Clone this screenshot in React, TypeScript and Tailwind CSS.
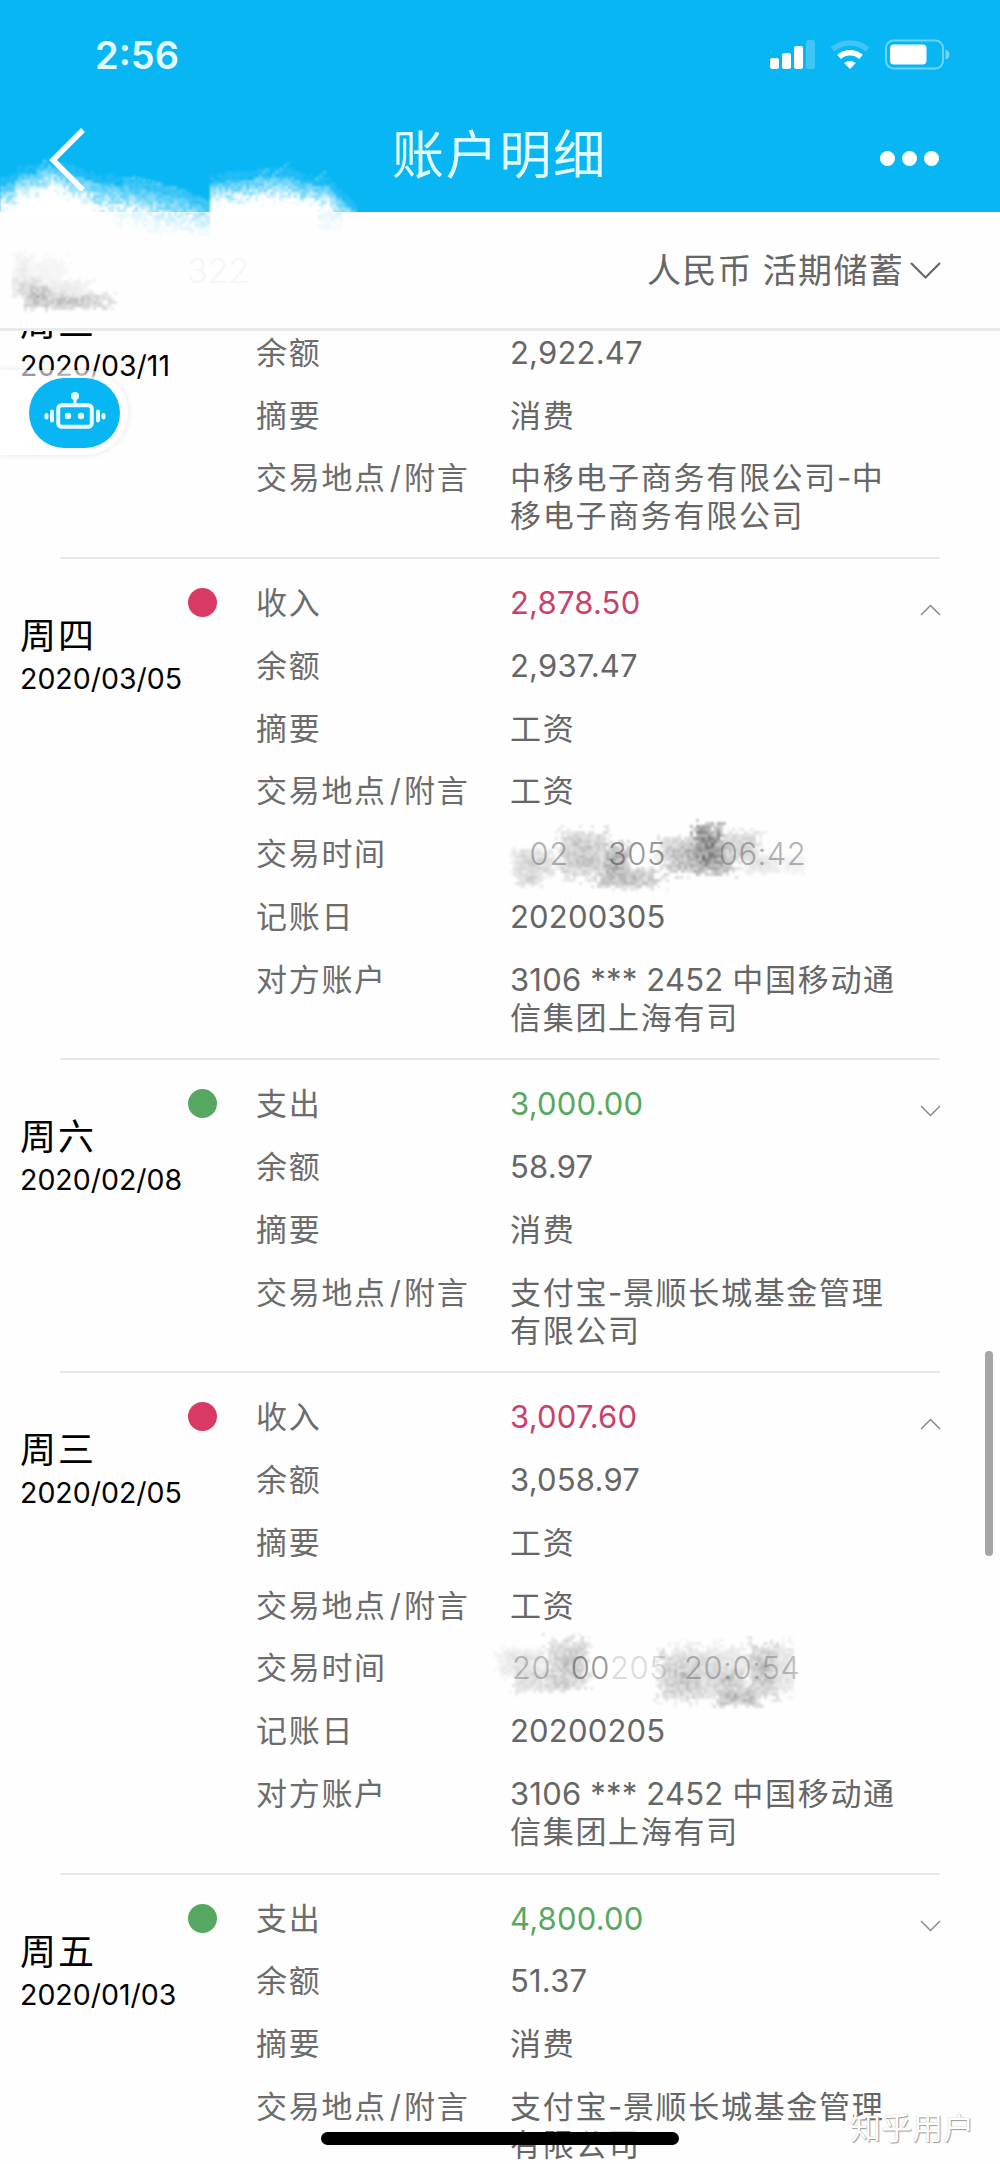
import React from 'react';

const CN = "font-['Inter','Noto_Sans_CJK_SC',sans-serif]";

/* Deterministic pseudo-random value in 0..1 for a grid cell */
function noise(x: number, y: number, seed = 1) {
  const v = Math.sin(x * 12.9898 + y * 78.233 + seed * 37.719) * 43758.5453;
  return v - Math.floor(v);
}

/* Splits a string so that CJK runs and Latin runs can be tracked separately */
function Mixed({ text }: { text: string }) {
  const parts = text.match(/[\u4e00-\u9fff]+|[^\u4e00-\u9fff]+/g) ?? [];
  return (
    <>
      {parts.map((p, i) => (
        <span
          key={i}
          className={
            /[\u4e00-\u9fff]/.test(p)
              ? 'tracking-[1.7px]'
              : p === '/'
                ? 'px-[3px]'
                : p === '-'
                  ? 'tracking-[0.5px]'
                  : 'tracking-[0.2px]'
          }
        >
          {p}
        </span>
      ))}
    </>
  );
}

type Blob = [cx: number, cy: number, rx: number, ry: number, strength: number];

/* Pixelated grey smear built from soft elliptical blobs */
function Smudge({ w, h, blobs, seed, cell = 3 }: { w: number; h: number; blobs: Blob[]; seed: number; cell?: number }) {
  const rects: React.ReactNode[] = [];
  for (let y = 0; y < h; y += cell) {
    for (let x = 0; x < w; x += cell) {
      let a = 0;
      for (const [cx, cy, rx, ry, s] of blobs) {
        const d = Math.max(Math.abs((x - cx) / rx), Math.abs((y - cy) / ry));
        const edge = 1 + (noise(x, y, seed + 5) - 0.5) * 0.5;
        if (d < edge) a = Math.max(a, s * (1 - d * 0.55));
      }
      a *= 0.45 + noise(x, y, seed) * 0.75;
      if (a > 0.03) rects.push(<rect key={`${x}-${y}`} x={x} y={y} width={cell} height={cell} fill="#555" opacity={a.toFixed(2)} />);
    }
  }
  return (
    <svg width={w} height={h} viewBox={`0 0 ${w} ${h}`} className="blur-[0.8px]">
      {rects}
    </svg>
  );
}

const EDGE: [number, number][] = [
  [0, 184], [12, 182], [18, 173], [35, 171], [48, 164], [62, 170], [82, 177], [100, 182], [125, 184], [150, 190],
  [180, 196], [207, 208], [209, 181], [240, 179], [262, 176], [290, 176], [302, 182], [328, 185], [338, 197], [356, 211],
];

function edgeAt(x: number) {
  for (let i = 1; i < EDGE.length; i++) {
    const [x1, y1] = EDGE[i];
    const [x0, y0] = EDGE[i - 1];
    if (x <= x1) return y0 + ((y1 - y0) * (x - x0)) / (x1 - x0);
  }
  return 999;
}

/* White brush strokes that spill over the lower edge of the header */
function BrushCloud() {
  const c = 3;
  const rects: React.ReactNode[] = [];
  for (let y = 156; y < 213; y += c) {
    for (let x = -3; x < 360; x += c) {
      const depth = y - edgeAt(x);
      const band = x > 90 && x < 209 ? 44 : 30;
      let a = depth < 0 ? 0 : 0.32 + (depth / band) * 0.75;
      if (depth >= -9 && depth < 0) a = x > 120 && x < 209 ? 0.22 : 0.1;
      a *= 0.5 + noise(x, y, 3) * 0.75 + Math.max(0, depth / 70);
      if (depth > band) a = 1;
      if (a > 0.06) rects.push(<rect key={`${x}-${y}`} x={x} y={y} width={c} height={y === 210 ? 5 : c} fill="#fff" opacity={Math.min(1, a).toFixed(2)} />);
    }
  }
  for (let y = 212; y < 240; y += c) {
    for (let x = 105; x < 340; x += c) {
      if (x > 207 && x < 318) continue;
      const reach = x > 300 ? 0.35 : (x - 95) / 115;
      const a = (0.5 - (y - 212) / 50) * reach * noise(x, y, 9);
      if (a > 0.04) rects.push(<rect key={`b${x}-${y}`} x={x} y={y} width={c} height={c} fill="#09b6f4" opacity={a.toFixed(2)} />);
    }
  }
  return (
    <svg width="380" height="260" viewBox="0 0 380 260" className="pointer-events-none absolute left-0 top-0 blur-[0.8px]">
      {rects}
      <g stroke="#fff" strokeWidth="3" strokeDasharray="3 2" opacity="0.28" fill="none">
        <path d="M255 180l13-11M272 176l17-13M316 180l10-9M38 171l8-11M133 177l30 7" />
      </g>
    </svg>
  );
}

function StatusIcons() {
  return (
    <svg width="182" height="34" viewBox="0 0 182 34" fill="#fff">
      <rect x="2" y="20" width="9" height="11" rx="2.5" />
      <rect x="14" y="15" width="9" height="16" rx="2.5" />
      <rect x="26" y="8" width="9" height="23" rx="2.5" />
      <rect x="38" y="2" width="9" height="29" rx="2.5" opacity="0.22" />
      <g fill="none" strokeWidth="5.6">
        <path d="M64.5 11.5a27 27 0 0 1 35 0" stroke="#fff" opacity="0.22" />
        <path d="M71 18.8a17 17 0 0 1 22 0" stroke="#fff" />
      </g>
      <path d="M76.2 25a9.2 9.2 0 0 1 11.6 0L82 31z" />
      <rect x="118" y="2.5" width="57" height="28" rx="7.5" fill="none" stroke="#fff" strokeWidth="2" opacity="0.4" />
      <rect x="122" y="6.500" width="36.500" height="20" rx="4" />
      <path d="M177.500 11.500q4 1.500 4 5t-4 5z" opacity="0.45" />
    </svg>
  );
}

function Robot() {
  return (
    <svg width="62" height="38" viewBox="0 0 62 38" fill="#e8fbff">
      <circle cx="31" cy="5" r="4" />
      <rect x="29.500" y="7" width="3" height="8" />
      <rect x="14.200" y="14.200" width="33.600" height="21.600" rx="3.500" fill="none" stroke="#e8fbff" strokeWidth="4" />
      <circle cx="24" cy="25" r="3.200" />
      <circle cx="37" cy="25" r="3.200" />
      <rect x="6" y="18.500" width="4" height="13" rx="2" />
      <rect x="52" y="18.500" width="4" height="13" rx="2" />
      <rect x="0.500" y="22" width="4" height="6.500" rx="2" />
      <rect x="57.500" y="22" width="4" height="6.500" rx="2" />
    </svg>
  );
}

type Entry = {
  day: string;
  date: string;
  kind: '收入' | '支出';
  amount: string;
  balance: string;
  summary: string;
  place: string[];
  extra?: { time: React.ReactNode; booked: string; other: string[] };
};

function Row({ label, lines, tone = 'text-[#666]' }: { label: string; lines: React.ReactNode[]; tone?: string }) {
  return (
    <div className="flex pb-[24.75px]">
      <div className="w-[254px] shrink-0 text-[#6c6c6c]">
        <Mixed text={label} />
      </div>
      <div className={`grow ${tone}`}>
        {lines.map((l, i) => (
          <div key={i} className="h-[38px] whitespace-nowrap">
            {typeof l === 'string' ? <Mixed text={l} /> : l}
          </div>
        ))}
      </div>
    </div>
  );
}

function EntryBlock({ e }: { e: Entry }) {
  const income = e.kind === '收入';
  return (
    <section className="-mb-[3px] flex">
      <div className="w-[188px] shrink-0 pl-[20px] pt-[54px] text-black">
        <div className="h-[47px] text-[36px] leading-[46px] tracking-[2px]">{e.day}</div>
        <div className="h-[38px] text-[28.500px] leading-[38px]">{e.date}</div>
      </div>
      <div className="w-[68px] shrink-0 pt-[29px]">
        <div className={`size-[29px] rounded-full ${income ? 'bg-[#d93a64]' : 'bg-[#56a860]'}`} />
      </div>
      <div className="grow pt-[25px] text-[31px] leading-[38px]">
        <Row label={e.kind} lines={[e.amount]} tone={income ? 'text-[#c9416a]' : 'text-[#56a860]'} />
        <Row label="余额" lines={[e.balance]} />
        <Row label="摘要" lines={[e.summary]} />
        <Row label="交易地点/附言" lines={e.place} />
        {e.extra && (
          <>
            <Row label="交易时间" lines={[e.extra.time]} />
            <Row label="记账日" lines={[e.extra.booked]} />
            <Row label="对方账户" lines={e.extra.other} />
          </>
        )}
      </div>
      <div className="w-[80px] shrink-0 pt-[44px]">
        <svg width="22" height="14" viewBox="0 0 22 14" fill="none" stroke="#8a8a8a" strokeWidth="1.500">
          <path d={e.extra ? 'M1 12L10.500 2.500L20 12' : 'M1 2L10.500 11.500L20 2'} />
        </svg>
      </div>
    </section>
  );
}

const timeA = (
  <div className="relative w-[300px]">
    <span className="font-light tracking-[0.5px] text-[#b4b4b4]">
      <span className="text-transparent">2</span>02<span className="text-transparent">00</span>
      <span className="text-[#999]">305</span> <span className="text-transparent">1</span>
      <span className="pl-[31px]">06:42</span>
    </span>
    <div className="absolute left-0 top-[-16px]">
      <Smudge
        w={300}
        h={76}
        seed={4}
        blobs={[
          [22, 42, 22, 14, 0.3],
          [18, 58, 14, 8, 0.3],
          [72, 34, 24, 24, 0.42],
          [104, 42, 14, 18, 0.65],
          [115, 58, 34, 10, 0.5],
          [168, 30, 20, 14, 0.42],
          [190, 38, 36, 16, 0.6],
          [196, 28, 16, 24, 0.95],
          [228, 26, 22, 16, 0.32],
          [250, 44, 20, 10, 0.18],
          [280, 44, 14, 10, 0.1],
        ]}
      />
    </div>
  </div>
);

const timeB = (
  <div className="relative w-[300px]">
    <span className="pl-[2px] font-light tracking-[0.500px] text-[#c4c4c4]">
      20<span className="text-transparent">2</span><span className="text-[#999]">00</span>
      <span className="text-[#dcdcdc]">205</span>
      <span className="pl-[16px] text-[#bbb]">20:0</span>:54
    </span>
    <div className="absolute left-[-16px] top-[-16px]">
      <Smudge
        w={300}
        h={76}
        seed={8}
        blobs={[
          [26, 28, 24, 14, 0.2],
          [36, 44, 20, 14, 0.28],
          [72, 28, 20, 24, 0.42],
          [66, 46, 20, 10, 0.4],
          [188, 42, 24, 24, 0.42],
          [216, 40, 40, 28, 0.24],
          [230, 44, 22, 12, 0.4],
          [242, 62, 22, 9, 0.55],
          [268, 36, 16, 28, 0.42],
          [288, 34, 12, 26, 0.22],
        ]}
      />
    </div>
  </div>
);

const other = ['3106 *** 2452 中国移动通', '信集团上海有司'];
const fund = ['支付宝-景顺长城基金管理', '有限公司'];

const entries: Entry[] = [
  { day: '周三', date: '2020/03/11', kind: '支出', amount: '15.00', balance: '2,922.47', summary: '消费', place: ['中移电子商务有限公司-中', '移电子商务有限公司'] },
  { day: '周四', date: '2020/03/05', kind: '收入', amount: '2,878.50', balance: '2,937.47', summary: '工资', place: ['工资'], extra: { time: timeA, booked: '20200305', other } },
  { day: '周六', date: '2020/02/08', kind: '支出', amount: '3,000.00', balance: '58.97', summary: '消费', place: fund },
  { day: '周三', date: '2020/02/05', kind: '收入', amount: '3,007.60', balance: '3,058.97', summary: '工资', place: ['工资'], extra: { time: timeB, booked: '20200205', other } },
  { day: '周五', date: '2020/01/03', kind: '支出', amount: '4,800.00', balance: '51.37', summary: '消费', place: fund },
];

export default function App() {
  return (
    <div className={`relative flex h-[2164px] w-[1000px] flex-col overflow-hidden bg-[#fefefe] ${CN}`}>
      <header className="h-[212px] shrink-0 bg-[#09b6f4] text-[#e0fcff]">
        <div className="flex h-[110px] items-center justify-between pl-[95px] pr-[50px]">
          <span className="text-[38px] font-semibold leading-none">2:56</span>
          <StatusIcons />
        </div>
        <div className="flex h-[92px] items-center justify-between pl-[48px] pr-[61px]">
          <svg width="40" height="64" viewBox="0 0 40 64" fill="none" stroke="#fff" strokeWidth="5.500" className="mt-[5px]">
            <path d="M35 3L5 33L35 63" />
          </svg>
          <h1 className="pl-[31px] text-[52px] font-normal leading-none tracking-[1.800px]">账户明细</h1>
          <div className="flex gap-[7px] pt-[5px]">
            <i className="size-[15px] rounded-full bg-white" />
            <i className="size-[15px] rounded-full bg-white" />
            <i className="size-[15px] rounded-full bg-white" />
          </div>
        </div>
      </header>

      <div className="flex h-[119px] shrink-0 items-center justify-between border-b-[3px] border-[#e9eaea] pr-[59px]">
        <span className="pl-[187px] text-[34px] font-light text-[#f6f6f6]">322</span>
        <div className="flex items-center text-[34px] text-[#666]">
          <span className="tracking-[1.300px]">人民币</span>
          <span className="pl-[10px] tracking-[1.300px]">活期储蓄</span>
          <svg width="32" height="20" viewBox="0 0 32 20" fill="none" stroke="#666" strokeWidth="2.200" className="ml-[5px]">
            <path d="M2 3L16.500 17.500L31 3" />
          </svg>
        </div>
      </div>

      <main className="min-h-0 grow overflow-hidden">
        <div className="-mt-[85px]">
          {entries.map((e, i) => (
            <div key={e.date}>
              {i > 0 && <div className="ml-[60px] h-[2px] w-[880px] bg-[#e6e7e7]" />}
              <EntryBlock e={e} />
            </div>
          ))}
        </div>
      </main>

      <BrushCloud />
      <div className="absolute left-[12px] top-[250px]">
        <Smudge w={110} h={62} seed={12} blobs={[[10, 20, 10, 18, 0.12], [30, 24, 26, 20, 0.08], [14, 36, 14, 10, 0.3], [24, 46, 14, 12, 0.5], [56, 50, 40, 8, 0.4], [50, 40, 26, 12, 0.15]]} />
      </div>

      <div className="absolute left-0 top-[370px] flex h-[85px] w-[128px] items-center rounded-r-full bg-white/60 pl-[29px] shadow-[0_0_6px_rgba(0,0,0,0.1)]">
        <div className="flex h-[70px] w-[91px] items-center justify-center rounded-[35px] bg-[#09b6f4] pb-[5px] shadow-[0_0_4px_2px_#fff]">
          <Robot />
        </div>
      </div>

      <div className="absolute left-[985px] top-[1351px] h-[205px] w-[8px] rounded-full bg-[#a5a5a5]" />
      <div className="absolute left-[321px] top-[2132px] h-[13px] w-[358px] rounded-full bg-black" />
      <div className="absolute left-[850px] top-[2106px] whitespace-nowrap text-[31px] leading-[44px] text-white [text-shadow:1px_1px_1px_#999,0_0_1px_#bbb]">知乎用户</div>
    </div>
  );
}
